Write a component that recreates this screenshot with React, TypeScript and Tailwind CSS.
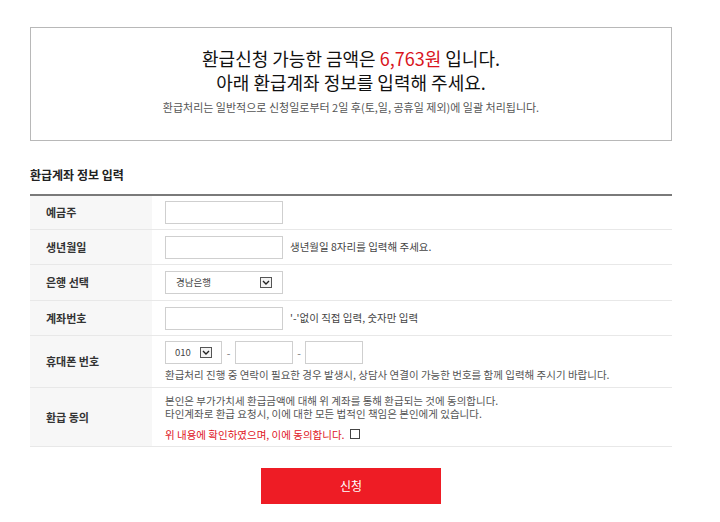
function SelectArrow() {
  return (
    <svg width="12" height="11" viewBox="0 0 12 11" className="block">
      <rect x="0.5" y="0.5" width="11" height="10" fill="#f4f4f4" stroke="#555" />
      <path d="M3 4 L6 7 L9 4" fill="none" stroke="#222" strokeWidth="1.4" />
    </svg>
  );
}

function Row({ label, h, children }: { label: string; h: string; children: React.ReactNode }) {
  return (
    <div className={`grid grid-cols-[122px_1fr] border-b border-[#e8e8e8] ${h}`}>
      <div className="flex items-center bg-[#f7f7f7] pl-4 text-[11px] font-semibold text-[#333]">{label}</div>
      <div className="flex flex-col justify-center pl-[13px]">{children}</div>
    </div>
  );
}

function Field({ w = "w-[118px]" }: { w?: string }) {
  return <div className={`h-[23px] border border-[#cfcfcf] bg-white ${w}`} />;
}

export default function App() {
  return (
    <div className="h-[522px] w-[720px] bg-white font-['Noto_Sans_CJK_KR',sans-serif] text-[#555]">
      <div className="ml-[30px] w-[642px] pt-[27px]">
        {/* 안내 박스 */}
        <div className="h-[114px] border border-[#b8b8b8] pt-[18px] text-center">
          <p className="text-[18px] leading-[24px] text-[#111]">
            환급신청 가능한 금액은 <span className="text-[#d9141c]">6,763원</span> 입니다.
          </p>
          <p className="text-[18px] leading-[24px] text-[#111]">아래 환급계좌 정보를 입력해 주세요.</p>
          <p className="mt-[6px] text-[11px] leading-[14px] text-[#555]">
            환급처리는 일반적으로 신청일로부터 2일 후(토,일, 공휴일 제외)에 일괄 처리됩니다.
          </p>
        </div>

        <h2 className="mt-[26px] mb-[11px] text-[12px] font-bold leading-4 text-[#222]">환급계좌 정보 입력</h2>

        <div className="border-t-2 border-[#7a7a7a] text-[10.5px]">
          <Row label="예금주" h="h-[34px]">
            <Field />
          </Row>
          <Row label="생년월일" h="h-[35px]">
            <div className="flex items-center gap-[7px]">
              <Field />
              <span className="text-[#444]">생년월일 8자리를 입력해 주세요.</span>
            </div>
          </Row>
          <Row label="은행 선택" h="h-[36px]">
            <div className="flex h-[23px] w-[118px] items-center justify-between border border-[#cfcfcf] pr-[10px] pl-[10px] text-[9.5px] text-[#444]">
              <span>경남은행</span>
              <SelectArrow />
            </div>
          </Row>
          <Row label="계좌번호" h="h-[35px]">
            <div className="flex items-center gap-[7px]">
              <Field />
              <span className="text-[#444]">&apos;-&apos;없이 직접 입력, 숫자만 입력</span>
            </div>
          </Row>
          <Row label="휴대폰 번호" h="h-[52px]">
            <div className="flex items-center text-[#777]">
              <div className="flex h-[23px] w-[57px] items-center justify-between border border-[#cfcfcf] pr-[9px] pl-[9px] text-[9.5px] text-[#444]">
                <span>010</span>
                <SelectArrow />
              </div>
              <span className="w-[13px] text-center">-</span>
              <Field w="w-[58px]" />
              <span className="w-[12px] text-center">-</span>
              <Field w="w-[58px]" />
            </div>
            <p className="mt-[4px] leading-[14px] text-[#555]">
              환급처리 진행 중 연락이 필요한 경우 발생시, 상담사 연결이 가능한 번호를 함께 입력해 주시기 바랍니다.
            </p>
          </Row>
          <Row label="환급 동의" h="h-[59px]">
            <p className="leading-[13.5px] text-[#555]">본인은 부가가치세 환급금액에 대해 위 계좌를 통해 환급되는 것에 동의합니다.</p>
            <p className="leading-[13.5px] text-[#555]">타인계좌로 환급 요청시, 이에 대한 모든 법적인 책임은 본인에게 있습니다.</p>
            <div className="mt-[7px] flex items-center gap-[6px] leading-[13px] text-[#e0141e]">
              <span>위 내용에 확인하였으며, 이에 동의합니다.</span>
              <span className="inline-block h-[10px] w-[10px] border border-[#444] bg-white" />
            </div>
          </Row>
        </div>

        <div className="mt-[21px] flex justify-center">
          <button className="h-[36px] w-[180px] bg-[#ee1c25] text-[12px] text-white">신청</button>
        </div>
      </div>
    </div>
  );
}
